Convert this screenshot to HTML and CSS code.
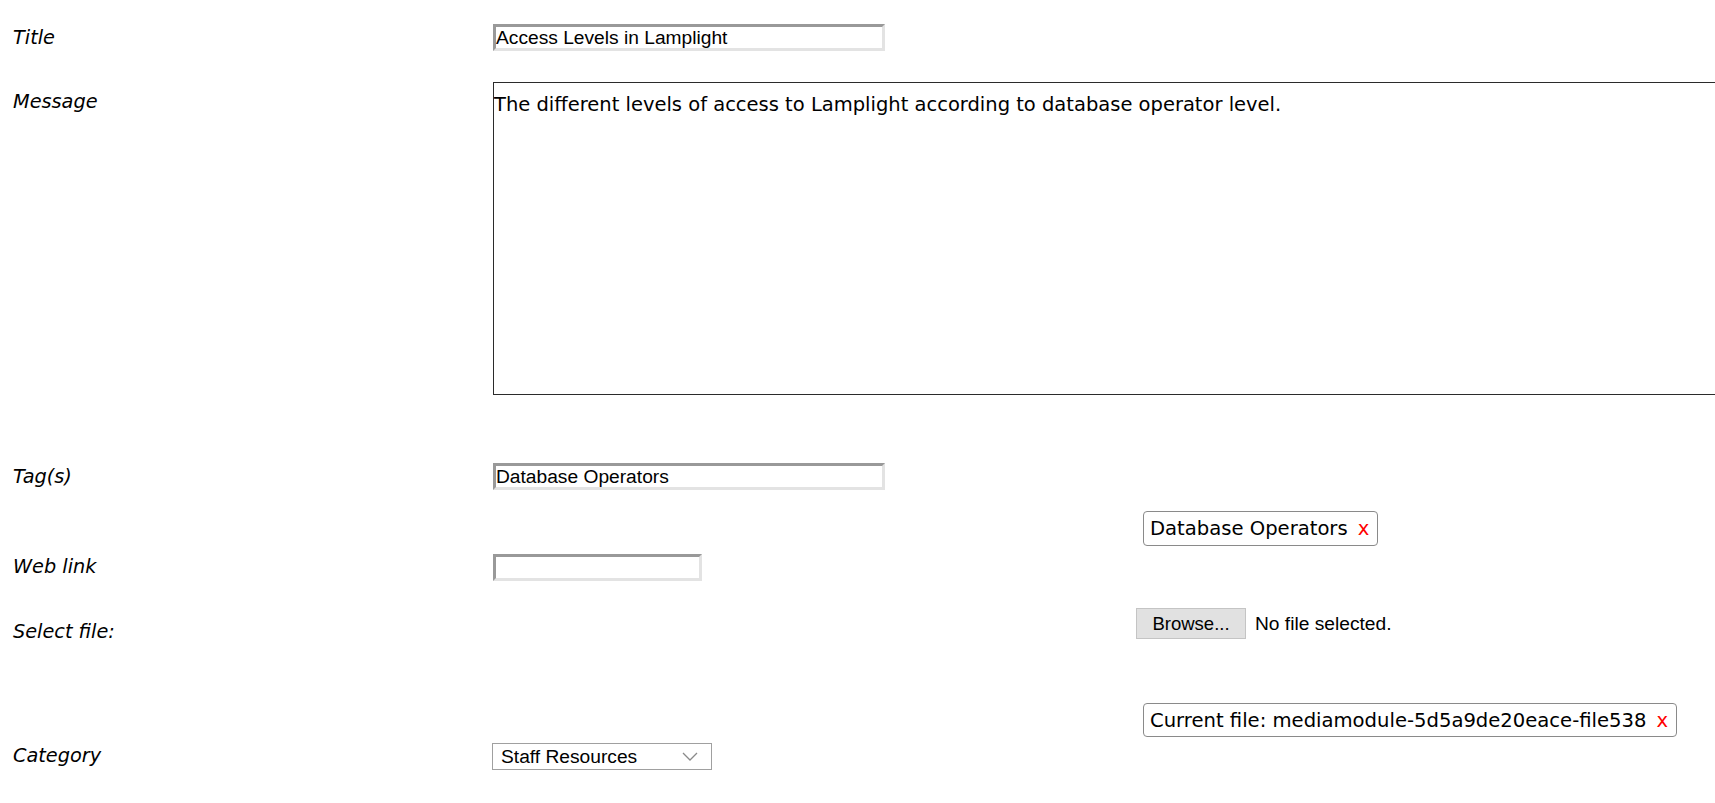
FILE: index.html
```html
<!DOCTYPE html>
<html lang="en">
<head>
<meta charset="utf-8">
<title>Edit resource</title>
<link rel="stylesheet" href="styles.css">
</head>
<body>
<form class="form">
  <div class="row row-title">
    <label class="label lbl-title">Title</label>
    <div class="field"><input class="text-input wide" type="text" value="Access Levels in Lamplight"></div>
  </div>
  <div class="row row-message">
    <label class="label lbl-message">Message</label>
    <div class="field"><textarea class="message">The different levels of access to Lamplight according to database operator level.</textarea></div>
  </div>
  <div class="row row-tags">
    <label class="label lbl-tags">Tag(s)</label>
    <div class="field"><input class="text-input wide" type="text" value="Database Operators"></div>
  </div>
  <div class="row row-chip1">
    <div></div>
    <div class="field chip-field"><span class="chip">Database Operators<span class="chip-x">x</span></span></div>
  </div>
  <div class="row row-web">
    <label class="label lbl-web">Web link</label>
    <div class="field"><input class="text-input narrow" type="text" value=""></div>
  </div>
  <div class="row row-file">
    <label class="label lbl-file">Select file:</label>
    <div class="field file-field"><span class="browse">Browse...</span><span class="no-file">No file selected.</span></div>
  </div>
  <div class="row row-chip2">
    <div></div>
    <div class="field chip-field"><span class="chip">Current file: mediamodule-5d5a9de20eace-file538<span class="chip-x">x</span></span></div>
  </div>
  <div class="row row-category">
    <label class="label lbl-category">Category</label>
    <div class="field">
      <div class="select">
        <span class="select-text">Staff Resources</span>
        <svg class="chevron" width="16" height="9" viewBox="0 0 16 9"><path d="M1 1 L8 8 L15 1" fill="none" stroke="#8a8a8a" stroke-width="1.3"/></svg>
      </div>
    </div>
  </div>
</form>
</body>
</html>
```
FILE: styles.css
```css
html, body {
  margin: 0;
  padding: 0;
  background: #ffffff;
  overflow: hidden;
}
body {
  font-family: "DejaVu Sans", Verdana, sans-serif;
  font-size: 19.6px;
  color: #000;
}
.form {
  display: flex;
  flex-direction: column;
  padding: 24px 0 0 13px;
}
.row {
  display: grid;
  grid-template-columns: 480px 1fr;
  align-items: start;
}
.label {
  font-style: italic;
  font-size: 19.3px;
  line-height: 22px;
  display: block;
}
.lbl-title { padding-top: 3px; }
.lbl-message { padding-top: 9px; }
.lbl-tags { padding-top: 3px; }
.lbl-web { padding-top: 2px; }
.lbl-file { padding-top: 13px; }
.lbl-category { padding-top: 2px; }

.row-message { margin-top: 31px; }
.row-tags { margin-top: 68px; }
.row-chip1 { margin-top: 21px; }
.row-web { margin-top: 8px; }
.row-file { margin-top: 27px; }
.row-chip2 { margin-top: 60px; }
.row-category { margin-top: 6px; }

.field { display: flex; align-items: flex-start; }

.text-input {
  box-sizing: border-box;
  height: 27px;
  border: 3px solid;
  border-color: #999999 #e3e3e3 #e3e3e3 #999999;
  padding: 0;
  margin: 0;
  font-family: "Liberation Sans", Arial, sans-serif;
  font-size: 19.2px;
  line-height: 21px;
  color: #000;
  background: #fff;
  outline: none;
}
.wide { width: 392px; }
.narrow { width: 209px; }

.message {
  box-sizing: border-box;
  width: 1300px;
  height: 313px;
  border: 1px solid #2b2b2b;
  padding: 11px 2px 2px 0;
  margin: 0;
  font-family: "DejaVu Sans", Verdana, sans-serif;
  font-size: 19.5px;
  line-height: 22px;
  color: #000;
  resize: none;
  outline: none;
  overflow: hidden;
}

.chip-field { padding-left: 650px; }
.chip {
  display: inline-flex;
  align-items: center;
  box-sizing: border-box;
  height: 35px;
  border: 1px solid #8a8a8a;
  border-radius: 4px;
  padding: 0 8px 0 6px;
  white-space: nowrap;
}
.row-chip2 .chip { height: 34px; }
.chip-x {
  color: #ff0000;
  margin-left: 10px;
}

.file-field {
  padding-left: 643px;
  align-items: center;
}
.browse {
  box-sizing: border-box;
  width: 110px;
  height: 31px;
  display: flex;
  align-items: center;
  justify-content: center;
  background: #e1e1e1;
  border: 1px solid #c4c4c4;
  font-family: "Liberation Sans", Arial, sans-serif;
  font-size: 18.5px;
}
.no-file {
  margin-left: 9px;
  font-family: "Liberation Sans", Arial, sans-serif;
  font-size: 19.2px;
}

.select {
  box-sizing: border-box;
  width: 220px;
  height: 27px;
  margin-left: -1px;
  border: 1px solid #a0a0a0;
  display: flex;
  align-items: center;
  justify-content: space-between;
  padding: 0 13px 0 8px;
  background: #fff;
}
.select-text {
  font-family: "Liberation Sans", Arial, sans-serif;
  font-size: 19.2px;
  line-height: 22px;
}
.chevron { display: block; }
```
